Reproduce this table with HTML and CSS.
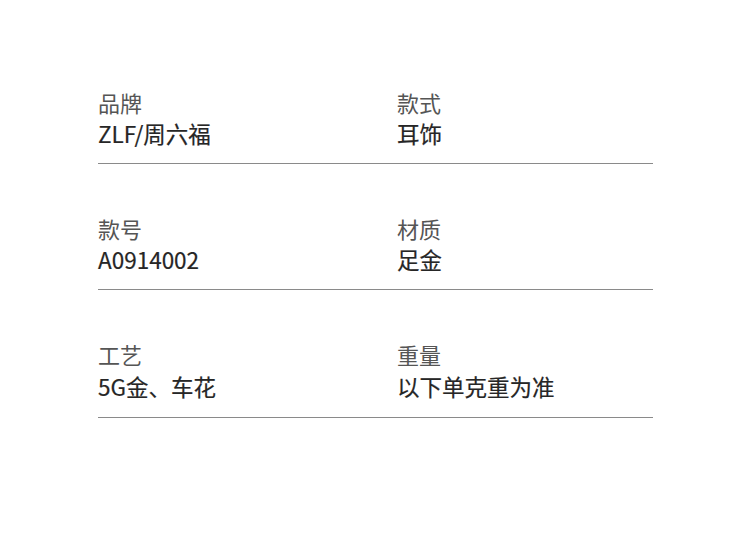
FILE: index.html
```html
<!DOCTYPE html>
<html lang="zh">
<head>
<meta charset="utf-8">
<link rel="stylesheet" href="styles.css">
</head>
<body>
<div class="specs">
  <div class="row">
    <div class="cell"><div class="label">品牌</div><div class="value">ZLF/周六福</div></div>
    <div class="cell"><div class="label">款式</div><div class="value">耳饰</div></div>
  </div>
  <div class="row">
    <div class="cell"><div class="label">款号</div><div class="value">A0914002</div></div>
    <div class="cell"><div class="label">材质</div><div class="value">足金</div></div>
  </div>
  <div class="row row-last">
    <div class="cell"><div class="label">工艺</div><div class="value">5G金、车花</div></div>
    <div class="cell"><div class="label">重量</div><div class="value">以下单克重为准</div></div>
  </div>
</div>
</body>
</html>
```
FILE: styles.css
```css
html, body {
  margin: 0;
  padding: 0;
  background: #ffffff;
}
body {
  width: 750px;
  height: 553px;
  font-family: "Noto Sans CJK SC", "Noto Sans", sans-serif;
}
.specs {
  margin-left: 98px;
  width: 555px;
  padding-top: 38px;
}
.row {
  display: grid;
  grid-template-columns: 299px 1fr;
  padding-top: 53px;
  padding-bottom: 18px;
  border-bottom: 1px solid #8a8a8a;
}
.row-last {
  padding-bottom: 19px;
}
.label {
  font-size: 22px;
  line-height: 22px;
  color: #555555;
}
.value {
  margin-top: 9px;
  font-size: 22.5px;
  line-height: 23px;
  font-weight: 400;
  color: #262626;
  -webkit-text-stroke: 0.2px #262626;
}
.row-last .value {
  margin-top: 10px;
}
```
